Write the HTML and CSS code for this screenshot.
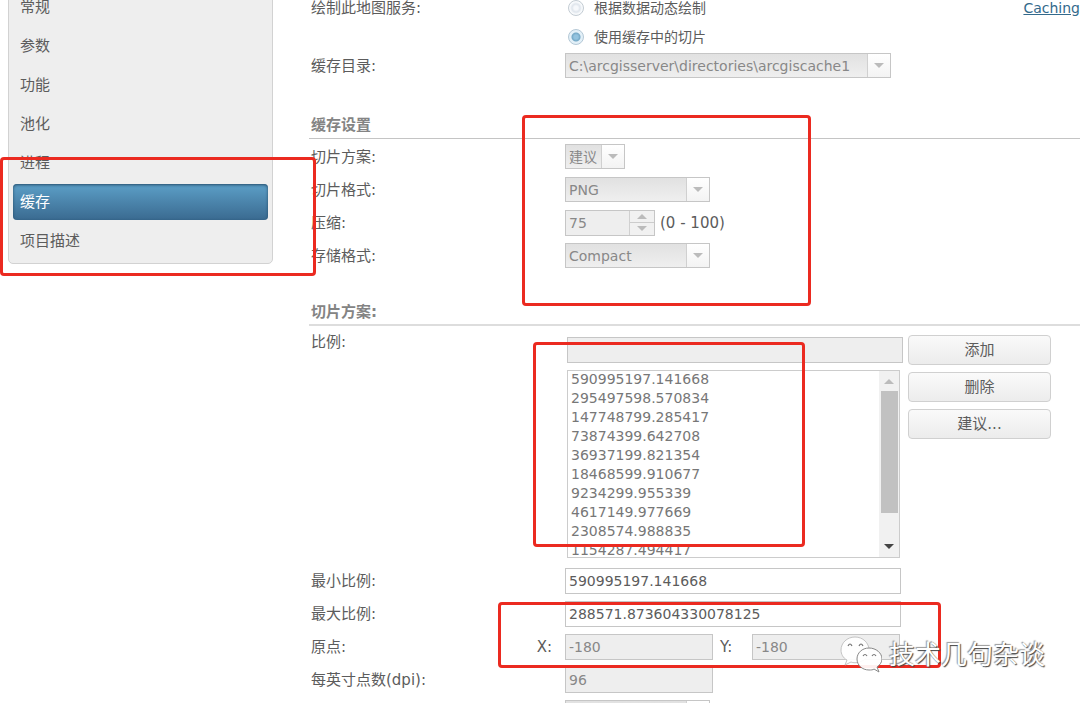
FILE: index.html
```html
<!DOCTYPE html>
<html lang="zh-CN">
<head>
<meta charset="utf-8">
<title>缓存设置</title>
<link rel="stylesheet" href="styles.css">
</head>
<body>
<div class="page">
  <nav class="sidebar">
    <a class="nav-item" href="#general">常规</a>
    <a class="nav-item" href="#params">参数</a>
    <a class="nav-item" href="#capabilities">功能</a>
    <a class="nav-item" href="#pooling">池化</a>
    <a class="nav-item" href="#processes">进程</a>
    <a class="nav-item active" href="#caching">缓存</a>
    <a class="nav-item" href="#item">项目描述</a>
  </nav>

  <main class="content">
    <form>
      <section class="source">
        <div class="row">
          <span class="label">绘制此地图服务:</span>
          <label class="choice"><input class="radio" type="radio" name="draw">根据数据动态绘制</label>
          <a class="help" href="#help">Caching</a>
        </div>
        <div class="row">
          <span class="label"></span>
          <label class="choice"><input class="radio" type="radio" name="draw" checked>使用缓存中的切片</label>
        </div>
        <div class="row">
          <label class="label" for="dir">缓存目录:</label>
          <span class="drop drop-path"><select id="dir" disabled><option>C:\arcgisserver\directories\arcgiscache1</option></select><span class="drop-btn"><i class="down"></i></span></span>
        </div>
      </section>

      <section class="settings">
        <h2 class="heading">缓存设置</h2>
        <div class="row">
          <label class="label" for="scheme">切片方案:</label>
          <span class="drop drop-small"><select id="scheme" disabled><option>建议</option></select><span class="drop-btn"><i class="down"></i></span></span>
        </div>
        <div class="row">
          <label class="label" for="format">切片格式:</label>
          <span class="drop"><select id="format" disabled><option>PNG</option></select><span class="drop-btn"><i class="down"></i></span></span>
        </div>
        <div class="row">
          <label class="label" for="quality">压缩:</label>
          <span class="spinner">
            <input id="quality" type="text" value="75" disabled>
            <span class="steps">
              <button type="button" aria-label="增加" disabled><i class="up"></i></button>
              <button type="button" aria-label="减少" disabled><i class="down"></i></button>
            </span>
          </span>
          <span class="range">(0 - 100)</span>
        </div>
        <div class="row">
          <label class="label" for="storage">存储格式:</label>
          <span class="drop"><select id="storage" disabled><option>Compact</option></select><span class="drop-btn"><i class="down"></i></span></span>
        </div>
      </section>

      <section class="scheme">
        <h2 class="heading heading-soft">切片方案:</h2>
        <div class="scales">
          <label class="label" for="scale">比例:</label>
          <div class="scale-fields">
            <input class="field" id="scale" type="text" disabled>
            <div class="list">
              <select multiple size="10" aria-label="比例列表" disabled>
                <option>590995197.141668</option>
                <option>295497598.570834</option>
                <option>147748799.285417</option>
                <option>73874399.642708</option>
                <option>36937199.821354</option>
                <option>18468599.910677</option>
                <option>9234299.955339</option>
                <option>4617149.977669</option>
                <option>2308574.988835</option>
                <option>1154287.494417</option>
              </select>
              <span class="scrollbar"><i class="up"></i><span class="thumb"></span><i class="down dark"></i></span>
            </div>
          </div>
          <div class="actions">
            <button type="button">添加</button>
            <button type="button">删除</button>
            <button type="button">建议...</button>
          </div>
        </div>
        <div class="row">
          <label class="label" for="min">最小比例:</label>
          <input class="field wide" id="min" type="text" value="590995197.141668">
        </div>
        <div class="row">
          <label class="label" for="max">最大比例:</label>
          <input class="field wide" id="max" type="text" value="288571.873604330078125">
        </div>
        <div class="row">
          <span class="label origin-label">原点:<label for="ox">X:</label></span>
          <input class="field" id="ox" type="text" value="-180" disabled>
          <label class="y-label" for="oy">Y:</label>
          <input class="field" id="oy" type="text" value="-180" disabled>
        </div>
        <div class="row">
          <label class="label" for="dpi">每英寸点数(dpi):</label>
          <input class="field" id="dpi" type="text" value="96" disabled>
        </div>
        <div class="row">
          <span class="label"></span>
          <span class="drop"><select aria-label="单位" disabled><option></option></select><span class="drop-btn"><i class="down"></i></span></span>
        </div>
      </section>
    </form>
  </main>

  <div class="mark mark-nav"></div>
  <div class="mark mark-settings"></div>
  <div class="mark mark-scales"></div>
  <div class="mark mark-origin"></div>

  <div class="watermark">
    <svg class="wechat" viewBox="0 0 42 38" width="42" height="38" aria-hidden="true">
      <path fill="#fff" fill-opacity=".93" stroke="#c4c4c4" stroke-width="1" d="M15 1C7 1 1 7 1 14c0 4 2 8 6 10l-2 5 6-3c2 1 6 1 8 0 6-1 10-6 10-12C29 7 23 1 15 1z"/>
      <path fill="#fff" fill-opacity=".93" stroke="#888" stroke-width="1" d="M29 12c-7 0-12 5-12 11s5 11 12 11c2 0 4 0 5-1l5 3-2-5c3-2 5-5 5-8 0-6-6-11-13-11z"/>
      <path fill="none" stroke="#777" stroke-width="1.2" d="M8 10q2-4 4 0M19 10q2-4 4 0M23 20q2-3 4 0M32 20q2-3 4 0"/>
    </svg>
    <span>技术几句杂谈</span>
  </div>
</div>
</body>
</html>
```
FILE: styles.css
```css
* { box-sizing: border-box; }

body {
  margin: 0;
  background: #fff;
  color: #5c5c5c;
  font: 14px/22px "DejaVu Sans", "Noto Sans CJK SC", sans-serif;
}

.page {
  position: relative;
  display: flex;
  align-items: flex-start;
  height: 100vh;
  overflow: hidden;
}

input, select, button { font: inherit; color: inherit; }

/* Navigation */
.sidebar {
  flex: 0 0 265px;
  display: flex;
  flex-direction: column;
  gap: 3px;
  margin: -16px 0 0 8px;
  padding: 4px;
  background: #eee;
  border: 1px solid #d2d2d2;
  border-radius: 5px;
}
.nav-item {
  height: 36px;
  padding: 0 7px;
  border-radius: 4px;
  color: #5c5c5c;
  font-size: 15px;
  line-height: 36px;
  text-decoration: none;
}
.nav-item.active {
  color: #fff;
  background: linear-gradient(#5c9fc7, #3a6a90);
  box-shadow: inset 0 1px 3px #234a68;
}

/* Form rows */
.content { flex: 1; min-width: 0; padding-left: 36px; }
.row { display: flex; align-items: center; height: 33px; }
.label { flex: 0 0 256px; padding-left: 2px; font-size: 15px; }
.source { margin-top: -7px; }
.source .row { height: 29px; }
.choice { display: flex; align-items: center; gap: 10px; padding-left: 3px; }
.help { margin-left: auto; color: #336a8c; text-decoration: underline; }

.radio {
  appearance: none;
  width: 16px;
  height: 16px;
  margin: 0;
  border: 1px solid #c3ccd3;
  border-radius: 50%;
  background: radial-gradient(circle, #f6f8fb 0 2px, #dfe5ec 4px, #f8fafc 6px);
}
.radio:checked {
  border-color: #b4c8d6;
  background: radial-gradient(circle, #93c3df 0 2px, #74a8c6 4px, #e3f0f8 5px);
}

.heading {
  margin: 0;
  padding-left: 2px;
  border-bottom: 1px solid #c4c4c4;
  color: #848484;
  font-size: 15px;
  font-weight: 700;
  line-height: 25px;
}
.settings { margin-top: 33px; }
.settings .heading { margin-bottom: 1px; }
.scheme { margin-top: 28px; }
.heading-soft { border-bottom: 2px solid #ddd; line-height: 24px; }

/* Drop-downs */
.drop {
  display: flex;
  width: 145px;
  height: 25px;
  border: 1px solid #c6c6c6;
}
.drop-path { width: 326px; }
.drop-small { width: 60px; }
.drop select {
  flex: 1;
  min-width: 0;
  appearance: none;
  padding: 0 3px;
  border: 0;
  border-radius: 0;
  background: linear-gradient(#e1e1e1, #efefef);
  color: #888;
  opacity: 1;
}
.drop-btn {
  display: flex;
  flex: 0 0 23px;
  align-items: center;
  justify-content: center;
  border-left: 1px solid #d0d0d0;
  background: linear-gradient(#fff, #f3f3f3);
}
.up, .down {
  width: 0;
  height: 0;
  border: 5px solid transparent;
}
.down { border-top-color: #bbb; border-bottom: 0; }
.up { border-bottom-color: #bbb; border-top: 0; }
.dark { border-top-color: #444; }

/* Spinner */
.spinner { display: flex; width: 90px; height: 26px; border: 1px solid #c6c6c6; background: #eee; }
.spinner input { flex: 1; min-width: 0; padding: 0 3px; border: 0; background: #eee; color: #888; }
.steps { display: flex; flex: 0 0 25px; flex-direction: column; border-left: 1px solid #d0d0d0; }
.steps button {
  display: flex;
  flex: 1;
  align-items: center;
  justify-content: center;
  padding: 0;
  border: 0;
  background: #f1f1f1;
}
.steps button + button { border-top: 1px solid #ccc; }
.range { padding-left: 5px; font-size: 15px; }

/* Text boxes */
.field {
  width: 148px;
  height: 26px;
  padding: 0 3px;
  border: 1px solid #c6c6c6;
  background: #fff;
}
.field:disabled { background: #eee; color: #888; }
.wide { width: 336px; }

/* Scales */
.scales { display: flex; align-items: flex-start; margin-bottom: 6px; padding-top: 5px; }
.scale-fields { display: flex; flex-direction: column; gap: 7px; width: 336px; margin-left: 2px; padding-top: 6px; }
.scale-fields .field { width: 100%; }
.list {
  display: flex;
  width: 333px;
  height: 188px;
  border: 1px solid #ccc;
  overflow: hidden;
}
.list select {
  flex: 1;
  min-width: 0;
  height: 100%;
  padding: 0;
  border: 0;
  border-radius: 0;
  background: #fff;
  color: #777;
  opacity: 1;
  overflow: hidden;
  scrollbar-width: none;
}
.list option { height: 19px; min-height: 0; padding: 0 3px; color: #777; line-height: 19px; }
.scrollbar {
  display: flex;
  flex: 0 0 20px;
  flex-direction: column;
  align-items: center;
  padding: 8px 0;
  background: #f1f1f1;
}
.thumb { width: 17px; height: 122px; margin: 7px 0 auto; background: #c1c1c1; }
.actions { display: flex; flex-direction: column; gap: 7px; width: 143px; margin-left: 5px; padding-top: 4px; }
.actions button {
  height: 30px;
  padding: 0;
  border: 1px solid #d0d0d0;
  border-radius: 4px;
  background: linear-gradient(#fafafa, #ececec);
  font-size: 15px;
}
.origin-label { display: flex; justify-content: space-between; padding-right: 13px; }
.y-label { width: 39px; padding-left: 7px; font-size: 15px; }

/* Annotations drawn over the form */
.mark { position: absolute; border: 3px solid #eb2a20; border-radius: 4px; pointer-events: none; }
.mark-nav { left: 0; top: 157px; width: 316px; height: 119px; }
.mark-settings { left: 522px; top: 115px; width: 289px; height: 191px; }
.mark-scales { left: 533px; top: 342px; width: 272px; height: 205px; }
.mark-origin { left: 498px; top: 602px; width: 443px; height: 66px; }

.watermark {
  position: absolute;
  left: 840px;
  top: 636px;
  display: flex;
  align-items: center;
  gap: 7px;
  color: #fff;
  font-size: 26px;
  line-height: 38px;
  text-shadow: 1px 1px 1px #444, -1px -1px 1px #999;
  white-space: nowrap;
}
.wechat { display: block; }
```
